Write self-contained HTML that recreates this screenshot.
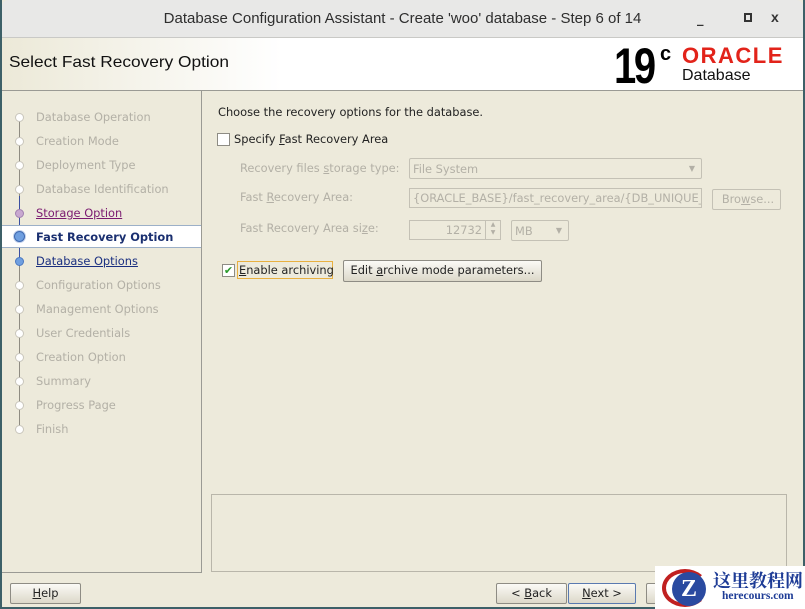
<!DOCTYPE html>
<html><head><meta charset="utf-8"><style>
*{box-sizing:border-box;margin:0;padding:0}
body{width:805px;height:609px;position:relative;overflow:hidden;background:#3d6068;font-family:"DejaVu Sans","Liberation Sans",sans-serif;font-size:11.4px;color:#222}
.a{position:absolute}
.win{left:2px;top:0;width:801px;height:607px;background:#edeadb}
.title{left:2px;top:0;width:801px;height:38px;background:#e8e8e7;border-bottom:1px solid #c9c9c6;border-radius:6px 6px 0 0;font-family:"Liberation Sans",sans-serif;font-size:15px;color:#2e2e2e;text-align:center;line-height:38px}
.ban{left:2px;top:38px;width:801px;height:53px;background:linear-gradient(90deg,#ece9d8 0%,#fff 35%,#fff 100%);border-bottom:1px solid #9a9a94}
.left{left:2px;top:91px;width:200px;height:482px;border-right:1px solid #9a9a94;border-bottom:1px solid #9a9a94}
.it{position:absolute;left:36px;color:#b3b0a6;white-space:nowrap}
.dot{position:absolute;left:15px;width:9px;height:9px;border-radius:50%;background:#fff;border:1px solid #c9c6bc}
.lbl{position:absolute;left:240px;color:#b3b0a6}
.fld{position:absolute;border:1px solid #c4c1b5;background:#edeadb;color:#b3b0a6;padding-left:3px;line-height:18px;font-size:11.4px;white-space:nowrap;overflow:hidden}
.btn{position:absolute;border:1px solid #8e8c84;border-radius:2px;background:linear-gradient(#fbfaf6,#dcd8c9);text-align:center;line-height:19px;color:#222;white-space:nowrap}
u{text-decoration:underline}
</style></head><body>
<div class="a win"></div>
<div class="a title">Database Configuration Assistant - Create 'woo' database - Step 6 of 14</div>
<div class="a" style="left:697px;top:12px;font-size:13px;font-weight:bold;color:#333">_</div>
<div class="a" style="left:744px;top:13px;width:8px;height:9px;border:2px solid #333"></div>
<div class="a" style="left:771px;top:9px;font-size:14px;font-weight:bold;color:#333;font-family:'Liberation Sans'">x</div>
<div class="a ban"></div>
<div class="a" style="left:9px;top:54px;font-family:'Liberation Sans',sans-serif;font-size:16px;color:#111;transform:scaleX(1.08);transform-origin:left">Select Fast Recovery Option</div>
<div class="a" style="left:614px;top:38px;font-family:'Liberation Sans',sans-serif;font-weight:bold;font-size:50px;letter-spacing:-3px;color:#000;transform:scaleX(0.8);transform-origin:left;line-height:56px">19</div>
<div class="a" style="left:660px;top:43px;font-family:'Liberation Sans',sans-serif;font-weight:bold;font-size:20px;color:#000">c</div>
<div class="a" style="left:682px;top:43px;font-family:'Liberation Sans',sans-serif;font-weight:bold;font-size:22px;color:#e2231a;letter-spacing:1.5px">ORACLE</div>
<div class="a" style="left:682px;top:67px;font-family:'Liberation Sans',sans-serif;font-size:16px;color:#111">Database</div>
<div class="a left"></div>
<div class="a" style="left:19px;top:117px;width:1px;height:314px;background:#8f8c82"></div>
<div class="a" style="left:19px;top:196px;width:1px;height:70px;background:#3a4fa0"></div>
<div class="a" style="left:2px;top:225px;width:199px;height:23px;background:#fff;border-top:1px solid #9cb0c8;border-bottom:1px solid #9cb0c8"></div>

<div class="dot" style="top:113px"></div><div class="it" style="top:110px">Database Operation</div>
<div class="dot" style="top:137px"></div><div class="it" style="top:134px">Creation Mode</div>
<div class="dot" style="top:161px"></div><div class="it" style="top:158px">Deployment Type</div>
<div class="dot" style="top:185px"></div><div class="it" style="top:182px">Database Identification</div>
<div class="dot" style="top:209px;background:#c8a8d0;border-color:#a080b0"></div><div class="it" style="top:206px;color:#7a1a70"><u>Storage Option</u></div>
<div class="dot" style="top:231px;left:14px;width:11px;height:11px;background:#6f9fe0;border-color:#3f6ab0;box-shadow:0 0 0 1px #c0d0ec"></div><div class="it" style="top:230px;color:#1a2f70;font-weight:bold">Fast Recovery Option</div>
<div class="dot" style="top:257px;background:#6f9fe0;border-color:#4a78c0"></div><div class="it" style="top:254px;color:#1a2f80"><u>Database Options</u></div>
<div class="dot" style="top:281px"></div><div class="it" style="top:278px">Configuration Options</div>
<div class="dot" style="top:305px"></div><div class="it" style="top:302px">Management Options</div>
<div class="dot" style="top:329px"></div><div class="it" style="top:326px">User Credentials</div>
<div class="dot" style="top:353px"></div><div class="it" style="top:350px">Creation Option</div>
<div class="dot" style="top:377px"></div><div class="it" style="top:374px">Summary</div>
<div class="dot" style="top:401px"></div><div class="it" style="top:398px">Progress Page</div>
<div class="dot" style="top:425px"></div><div class="it" style="top:422px">Finish</div>

<div class="a" style="left:218px;top:105px">Choose the recovery options for the database.</div>
<div class="a" style="left:217px;top:133px;width:13px;height:13px;border:1px solid #8e8c84;background:#fff"></div>
<div class="a" style="left:234px;top:132px">Specify <u>F</u>ast Recovery Area</div>
<div class="lbl" style="top:161px">Recovery files <u>s</u>torage type:</div>
<div class="lbl" style="top:190px">Fast <u>R</u>ecovery Area:</div>
<div class="lbl" style="top:221px">Fast Recovery Area si<u>z</u>e:</div>
<div class="fld" style="left:409px;top:158px;width:293px;height:21px;border-radius:2px;line-height:20px">File System<span style="position:absolute;right:6px;top:0;font-size:8px">▼</span></div>
<div class="fld" style="left:409px;top:188px;width:293px;height:20px">{ORACLE_BASE}/fast_recovery_area/{DB_UNIQUE_</div>
<div class="fld" style="left:712px;top:189px;width:69px;height:21px;border-radius:2px;text-align:center">Bro<u>w</u>se...</div>
<div class="fld" style="left:409px;top:220px;width:92px;height:20px;text-align:right;padding-right:18px">12732</div>
<div class="a" style="left:485px;top:221px;width:15px;height:18px;border-left:1px solid #c4c1b5;color:#b3b0a6;font-size:6px;line-height:8px;text-align:center">▲<br>▼</div>
<div class="fld" style="left:511px;top:220px;width:58px;height:21px;border-radius:2px;line-height:20px">MB<span style="position:absolute;right:6px;top:0;font-size:8px">▼</span></div>
<div class="a" style="left:222px;top:264px;width:13px;height:13px;border:1px solid #8e8c84;background:#fff;color:#2a9a2a;font-size:11px;line-height:11px;text-align:center;font-weight:bold">✔</div>
<div class="a" style="left:237px;top:261px;width:96px;height:18px;border:1px solid #e8b040;padding-left:1px;line-height:16px;white-space:nowrap"><u>E</u>nable archiving</div>
<div class="btn" style="left:343px;top:260px;width:199px;height:22px">Edit <u>a</u>rchive mode parameters...</div>

<div class="a" style="left:211px;top:494px;width:576px;height:78px;border:1px solid #b9b6aa"></div>
<div class="btn" style="left:10px;top:583px;width:71px;height:21px"><u>H</u>elp</div>
<div class="btn" style="left:496px;top:583px;width:71px;height:21px">&lt; <u>B</u>ack</div>
<div class="btn" style="left:568px;top:583px;width:68px;height:21px;border-color:#5a7ab0"><u>N</u>ext &gt;</div>
<div class="btn" style="left:646px;top:583px;width:40px;height:21px"></div>
<div class="a" style="left:655px;top:566px;width:150px;height:43px;background:#fff"></div>
<div class="a" style="left:662px;top:569px;width:46px;height:38px;border-radius:50%;border:4px solid #c02020;border-right-color:transparent"></div>
<div class="a" style="left:672px;top:572px;width:34px;height:34px;border-radius:50%;background:#2a4aa0;color:#fff;font-weight:bold;font-size:24px;text-align:center;line-height:34px;font-family:'Liberation Serif',serif">Z</div>
<div class="a" style="left:713px;top:567px;font-family:'Noto Serif CJK SC',serif;font-weight:bold;font-size:18px;color:#1e3c96">这里教程网</div>
<div class="a" style="left:722px;top:590px;font-family:'Liberation Serif',serif;font-weight:bold;font-size:11.5px;color:#1e3c96">herecours.com</div>
</body></html>
